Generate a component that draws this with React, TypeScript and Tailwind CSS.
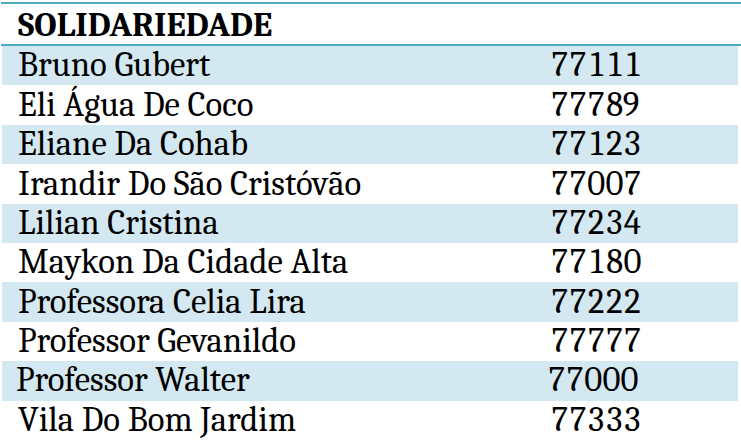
const rows = [
  { name: 'Bruno Gubert', code: '77111' },
  { name: 'Eli Água De Coco', code: '77789' },
  { name: 'Eliane Da Cohab', code: '77123' },
  { name: 'Irandir Do São Cristóvão', code: '77007' },
  { name: 'Lilian Cristina', code: '77234' },
  { name: 'Maykon Da Cidade Alta', code: '77180' },
  { name: 'Professora Celia Lira', code: '77222' },
  { name: 'Professor Gevanildo', code: '77777' },
  { name: 'Professor Walter', code: '77000', nudge: true },
  { name: 'Vila Do Bom Jardim', code: '77333' },
]

export default function App() {
  return (
    <div className="h-[441px] w-[741px] overflow-hidden bg-white pt-[2px] font-['Caladea','Liberation_Serif',serif] text-black">
      <div className="ml-[1px] border-t-2 border-b-2 border-[#4bacc6]">
        <div className="flex h-[40px] items-center pl-[17px] pt-[2px] text-[34.5px] font-bold leading-none">
          SOLIDARIEDADE
        </div>
      </div>
      <div className="mr-[3px] ml-[2px]">
        {rows.map((r, i) => (
          <div
            key={r.name}
            className={`flex h-[39.4px] items-center text-[34.7px] leading-none ${i % 2 === 0 ? 'bg-[#d3e8f1]' : ''} ${r.nudge ? 'pl-[14px]' : 'pl-[16px]'}`}
          >
            <span className="w-[532px] shrink-0">{r.name}</span>
            <span className={`tabular-nums tracking-[-1px] ${r.nudge ? '-ml-[1px]' : ''}`}>{r.code}</span>
          </div>
        ))}
      </div>
    </div>
  )
}
